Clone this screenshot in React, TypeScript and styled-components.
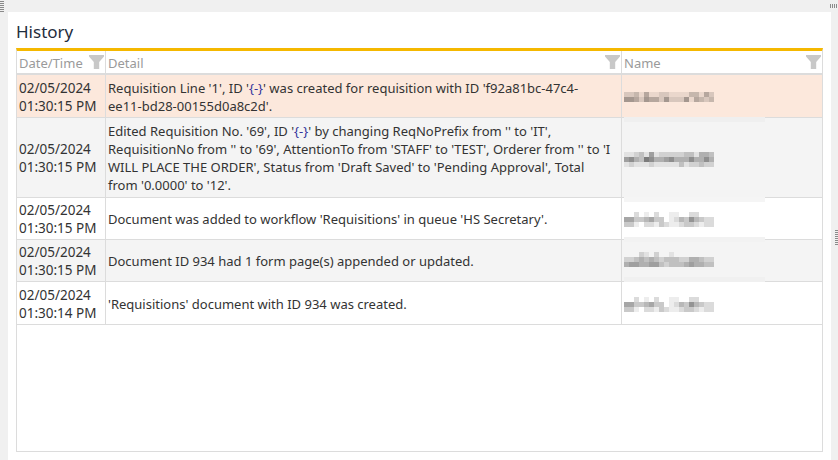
import React from "react";
import styled, { createGlobalStyle } from "styled-components";

const GlobalStyle = createGlobalStyle`
  html, body {
    margin: 0;
    padding: 0;
    background: #f0f0f0;
  }
`;

interface HistoryRow {
  date: string;
  time: string;
  detail: React.ReactNode;
  height: number;
  tone: "selected" | "shaded" | "plain";
  mosaic: string[];
  mosaicTop: number;
  bar?: { top: number; color: string };
}

const LinkId = () => <IdText>{"{-}"}</IdText>;

// alpha steps for the pixelated names, one digit per 5px block
const mosaicA = [
  "002010200110022000",
  "553345330124364322",
  "331022132112332122",
];

const mosaicB = [
  "000210200100000000",
  "223434323332244322",
  "455445532333454433",
];

const rows: HistoryRow[] = [
  {
    date: "02/05/2024",
    time: "01:30:15 PM",
    height: 43,
    tone: "selected",
    detail: (
      <>
        Requisition Line '1', ID '<LinkId />' was created for requisition with ID 'f92a81bc-47c4-
        <br />
        ee11-bd28-00155d0a8c2d'.
      </>
    ),
    mosaic: ["223141122111133142", "554254425222514323"],
    mosaicTop: 17,
  },
  {
    date: "02/05/2024",
    time: "01:30:15 PM",
    height: 80,
    tone: "shaded",
    detail: (
      <>
        Edited Requisition No. '69', ID '<LinkId />' by changing ReqNoPrefix from '' to 'IT', RequisitionNo from '' to '69', AttentionTo from 'STAFF' to 'TEST', Orderer from '' to 'I WILL PLACE THE ORDER', Status from 'Draft Saved' to 'Pending Approval', Total from '0.0000' to '12'.
      </>
    ),
    mosaic: ["112315122222331443", "564376445644464464", "121112111113122322"],
    mosaicTop: 34,
    bar: { top: -1, color: "#efefef" },
  },
  {
    date: "02/05/2024",
    time: "01:30:15 PM",
    height: 42,
    tone: "plain",
    detail: <>Document was added to workflow 'Requisitions' in queue 'HS Secretary'.</>,
    mosaic: mosaicA,
    mosaicTop: 14,
    bar: { top: -1, color: "#f5f5f5" },
  },
  {
    date: "02/05/2024",
    time: "01:30:15 PM",
    height: 42,
    tone: "shaded",
    detail: <>Document ID 934 had 1 form page(s) appended or updated.</>,
    mosaic: mosaicB,
    mosaicTop: 12,
    bar: { top: -3, color: "#f2f2f2" },
  },
  {
    date: "02/05/2024",
    time: "01:30:14 PM",
    height: 43,
    tone: "plain",
    detail: <>'Requisitions' document with ID 934 was created.</>,
    mosaic: mosaicA,
    mosaicTop: 15,
    bar: { top: -5, color: "#f0f0f0" },
  },
];

const Funnel = () => (
  <FilterIcon width="15" height="14" viewBox="0 0 15 14" aria-hidden="true">
    <path d="M0 0H15V1.5L10.2 7V14H4.8V7L0 1.5Z" fill="#c8c8c8" />
  </FilterIcon>
);

const NameMosaic = ({ grid, top }: { grid: string[]; top: number }) => (
  <MosaicSvg $top={top} width="90" height={grid.length * 5} viewBox={`0 0 90 ${grid.length * 5}`} aria-hidden="true" shapeRendering="crispEdges">
    {grid.map((line, y) =>
      line.split("").map((step, x) => (
        <rect key={`${x}-${y}`} x={x * 5} y={y * 5} width="5" height="5" fill="#000" opacity={Number(step) * 0.07} />
      ))
    )}
  </MosaicSvg>
);

const App: React.FC = () => (
  <>
    <GlobalStyle />
    <Page>
      <GripLeft />
      <GripTop />
      <GripRight />
      <Panel>
        <Title>History</Title>
        <Grid>
          <HeaderRow>
            <HeaderCell>
              <span>Date/Time</span>
              <Funnel />
            </HeaderCell>
            <HeaderCell>
              <span>Detail</span>
              <Funnel />
            </HeaderCell>
            <HeaderCell>
              <span>Name</span>
              <Funnel />
            </HeaderCell>
          </HeaderRow>
          {rows.map((row, i) => (
            <Row key={i} $height={row.height} $tone={row.tone}>
              <DateCell>
                <span>
                  {row.date}
                  <br />
                  {row.time}
                </span>
              </DateCell>
              <DetailCell>
                <span>{row.detail}</span>
              </DetailCell>
              <NameCell>
                {row.bar && <RedactBar $top={row.bar.top} $color={row.bar.color} />}
                <NameMosaic grid={row.mosaic} top={row.mosaicTop} />
              </NameCell>
            </Row>
          ))}
        </Grid>
      </Panel>
    </Page>
  </>
);

const Page = styled.div`
  position: relative;
  box-sizing: border-box;
  width: 838px;
  height: 460px;
  padding: 12px 7px 0 8px;
  background: #f0f0f0;
  overflow: hidden;
  font-family: "Noto Sans", "Open Sans", sans-serif;
`;

const GripLeft = styled.div`
  position: absolute;
  left: 0;
  top: 1px;
  width: 4px;
  height: 12px;
  background: repeating-linear-gradient(to bottom, #8a8a8a 0 1px, #f0f0f0 1px 2px);
`;

const GripTop = styled.div`
  position: absolute;
  right: 1px;
  top: 4px;
  width: 7px;
  height: 4px;
  background: repeating-linear-gradient(to right, #8a8a8a 0 1px, #f0f0f0 1px 2px);
`;

const GripRight = styled.div`
  position: absolute;
  right: 0;
  top: 230px;
  width: 3px;
  height: 15px;
  background: repeating-linear-gradient(to bottom, #8a8a8a 0 1px, #f0f0f0 1px 2px);
`;

const Panel = styled.section`
  box-sizing: border-box;
  height: 448px;
  padding: 0 8px;
  background: #fff;
`;

const Title = styled.h2`
  margin: 0;
  height: 36px;
  padding-top: 9px;
  box-sizing: border-box;
  font-size: 17px;
  line-height: 22px;
  font-weight: 400;
  color: #1f2d3d;
`;

const Grid = styled.div`
  box-sizing: border-box;
  height: 404px;
  border: 1px solid #dcdcdc;
  border-top: 3px solid #f5b800;
`;

const columns = "89px 516px 1fr";

const HeaderRow = styled.div`
  display: grid;
  grid-template-columns: ${columns};
  box-sizing: border-box;
  height: 24px;
  border-bottom: 2px solid #dcdcdc;
`;

const HeaderCell = styled.div`
  display: flex;
  justify-content: space-between;
  align-items: flex-start;
  box-sizing: border-box;
  padding: 4px 1px 0 2px;
  border-right: 1px solid #dcdcdc;
  font-size: 13px;
  line-height: 17px;
  color: #9a9a9a;

  &:last-child {
    border-right: none;
  }
`;

const FilterIcon = styled.svg`
  flex: none;
`;

const toneColors = {
  selected: "#fce8dc",
  shaded: "#f4f4f4",
  plain: "#ffffff",
};

const Row = styled.div<{ $height: number; $tone: HistoryRow["tone"] }>`
  display: grid;
  grid-template-columns: ${columns};
  box-sizing: border-box;
  height: ${(p) => p.$height}px;
  border-bottom: 1px solid #dcdcdc;
  background: ${(p) => toneColors[p.$tone]};
`;

const DateCell = styled.div`
  display: flex;
  align-items: center;
  box-sizing: border-box;
  padding: 1px 0 0 2px;
  border-right: 1px solid #dcdcdc;
  font-size: 13.5px;
  line-height: 18px;
  color: #333;
`;

const DetailCell = styled.div`
  display: flex;
  align-items: center;
  box-sizing: border-box;
  padding: 1px 4px 0 2px;
  border-right: 1px solid #dcdcdc;
  font-size: 13px;
  line-height: 18px;
  color: #333;
`;

const IdText = styled.span`
  color: #35359c;
`;

const NameCell = styled.div`
  position: relative;
  padding-left: 2px;
`;

const MosaicSvg = styled.svg<{ $top: number }>`
  display: block;
  margin-top: ${(p) => p.$top}px;
`;

const RedactBar = styled.div<{ $top: number; $color: string }>`
  position: absolute;
  left: 2px;
  top: ${(p) => p.$top}px;
  width: 141px;
  height: 5px;
  background: ${(p) => p.$color};
`;

export default App;
